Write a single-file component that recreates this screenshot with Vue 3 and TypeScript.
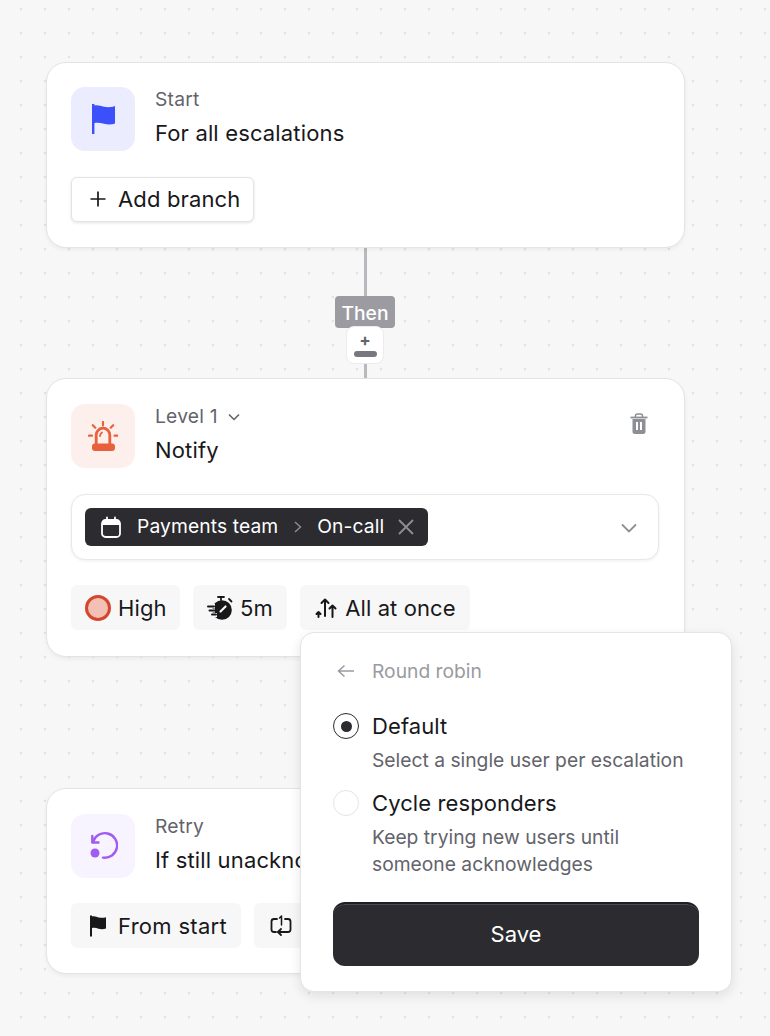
<script setup lang="ts">
const pills = ['From start'];
</script>

<template>
  <div class="page">
    <section class="card">
      <div class="head">
        <div class="tile tile-blue">
          <svg width="28" height="34" viewBox="0 0 28 34"><path d="M3 2h2.400v30H3z" fill="#3b4ffb"/><path d="M5 3.500c3.500-1 6.500.3 10 1.200 4 .9 8 .5 11-.7v17.400c-3 1.300-7 1.400-11 .4-3.500-1-6.800-1.300-10-.6z" fill="#3b4ffb"/></svg>
        </div>
        <div class="titles">
          <div class="label">Start</div>
          <div class="title">For all escalations</div>
        </div>
      </div>
      <button class="add">
        <svg width="20" height="20" viewBox="0 0 20 20"><path d="M10 2.500v15M2.500 10h15" stroke="#18181b" stroke-width="1.700" fill="none"/></svg>
        <span>Add branch</span>
      </button>
    </section>

    <div class="connector">
      <div class="line top"></div>
      <div class="then">Then</div>
      <div class="plus">
        <span class="plus-sign">+</span>
        <span class="plus-bar"></span>
      </div>
      <div class="line bottom"></div>
    </div>

    <section class="card level">
      <button class="trash" aria-label="Delete">
        <svg width="20" height="22" viewBox="0 0 20 22"><path d="M1.500 4.500h17" stroke="#8e8e95" stroke-width="1.800" fill="none"/><path d="M6.500 4V3a2 2 0 0 1 2-2h3a2 2 0 0 1 2 2v1" stroke="#8e8e95" stroke-width="1.500" fill="none"/><path fill-rule="evenodd" d="M3.500 6h13v12.500a2.500 2.500 0 0 1-2.500 2.500H6a2.500 2.500 0 0 1-2.500-2.500zM7 9v8h2V9zm4 0v8h2V9z" fill="#8e8e95"/></svg>
      </button>
      <div class="head">
        <div class="tile tile-red">
          <svg width="30" height="30" viewBox="0 0 30 30" fill="none" stroke="#e8603c">
            <path d="M15 1v3.500M4.800 4.200l2.500 2.500M25.200 4.200l-2.500 2.500M1 14.700h3M26.500 14.700h3" stroke-width="2.200" stroke-linecap="round"/>
            <path d="M8.200 23v-9a6.800 6.800 0 0 1 13.600 0v9" stroke-width="2.800"/>
            <path d="M12 15a4 4 0 0 1 2-3.500" stroke-width="1.800" stroke-linecap="round"/>
            <rect x="4" y="22.500" width="23" height="7.500" rx="3" fill="#e8603c" stroke="none"/>
          </svg>
        </div>
        <div class="titles">
          <div class="label">Level 1
            <svg class="mini" width="14" height="14" viewBox="0 0 14 14"><path d="M2 4.500l5 5 5-5" stroke="#5f5f68" stroke-width="1.500" fill="none"/></svg>
          </div>
          <div class="title">Notify</div>
        </div>
      </div>

      <div class="select">
        <div class="chip">
          <svg width="22" height="22" viewBox="0 0 22 22" fill="none"><rect x="2" y="4" width="18" height="17" rx="3.500" stroke="#fff" stroke-width="1.800"/><path d="M2 5.500a3 3 0 0 1 3-1.500h12a3 3 0 0 1 3 1.500V9H2z" fill="#fff"/><path d="M7 1.500v3M15 1.500v3" stroke="#fff" stroke-width="1.800" stroke-linecap="round"/></svg>
          <span class="chip-a">Payments team</span>
          <svg width="10" height="14" viewBox="0 0 10 14"><path d="M2 2l5.500 5L2 12" stroke="#8e8e95" stroke-width="1.400" fill="none"/></svg>
          <span class="chip-b">On-call</span>
          <svg width="18" height="18" viewBox="0 0 18 18"><path d="M2 2l14 14M16 2L2 16" stroke="#8e8e95" stroke-width="1.800" fill="none"/></svg>
        </div>
        <svg class="caret" width="16" height="10" viewBox="0 0 16 10"><path d="M1 1.500l7 7 7-7" stroke="#8e8e95" stroke-width="1.800" fill="none"/></svg>
      </div>

      <div class="pills">
        <div class="pill pill-high">
          <span class="sev"></span>
          High
        </div>
        <div class="pill">
          <svg width="26" height="26" viewBox="0 0 26 26" fill="none">
            <path d="M11 2h6M14 2v3M22 4l2.500 2.500" stroke="#18181b" stroke-width="1.800" stroke-linecap="round"/>
            <circle cx="15" cy="15" r="9.800" fill="#18181b"/>
            <path d="M0 11h8M1 15.500h7M3 20h7" stroke="#f7f7f7" stroke-width="4"/>
            <path d="M1 11.500h6M2.500 15.500h5M5 19.500h4" stroke="#18181b" stroke-width="2" stroke-linecap="round"/>
            <path d="M13.500 16.500l5-5" stroke="#f7f7f7" stroke-width="2.200" stroke-linecap="round"/>
          </svg>
          <span>5m</span>
        </div>
        <div class="pill">
          <svg width="24" height="24" viewBox="0 0 24 24" fill="none" stroke="#18181b" stroke-width="2" stroke-linecap="round" stroke-linejoin="round">
            <path d="M11 20V3.500M7.500 7L11 3.500 14.500 7"/>
            <path d="M18.500 21V9.500M15.500 12.500l3-3 3 3"/>
            <path d="M4.500 21v-5M2.500 18l2-2 2 2"/>
          </svg>
          All at once
        </div>
      </div>
    </section>

    <section class="card retry">
      <div class="head">
        <div class="tile tile-purple">
          <svg width="30" height="30" viewBox="0 0 30 30" fill="none">
            <path d="M5 11A12.300 12.300 0 1 1 15 26.600" stroke="#a05cf0" stroke-width="2.400" stroke-linecap="round"/>
            <path d="M4.300 5v6.500h6.200" stroke="#a05cf0" stroke-width="2.400" stroke-linecap="round" stroke-linejoin="round"/>
            <circle cx="7" cy="22" r="4.500" fill="#a05cf0"/>
          </svg>
        </div>
        <div class="titles">
          <div class="label">Retry</div>
          <div class="title">If still unacknowledged</div>
        </div>
      </div>
      <div class="pills">
        <div class="pill pill-wide" v-for="p in pills" :key="p">
          <svg width="26" height="26" viewBox="0 0 26 26"><path d="M5 2.500h2v21H5z" fill="#18181b"/><path d="M6.500 3.500c3-.9 5 .2 7.500 1 2.500.6 5 .4 7-.3v11.300c-2.500.9-5 .9-7.500.2-2.500-.8-4.500-1.200-7-.4z" fill="#18181b"/></svg>
          {{ p }}
        </div>
        <div class="pill">
          <svg width="26" height="26" viewBox="0 0 26 26" fill="none" stroke="#18181b" stroke-width="1.800" stroke-linecap="round" stroke-linejoin="round">
            <path d="M9 6H6a2.500 2.500 0 0 0-2.500 2.500v8A2.500 2.500 0 0 0 6 19h2"/>
            <path d="M17 6h3a2.500 2.500 0 0 1 2.500 2.500v8A2.500 2.500 0 0 1 20 19H10"/>
            <path d="M13 16l-3 3 3 3"/>
            <path d="M11.500 5l2-2v9" stroke-width="1.500"/>
          </svg>
          3 times
        </div>
      </div>
    </section>

    <aside class="popover">
      <div class="back">
        <svg width="20" height="14" viewBox="0 0 20 14"><path d="M18 7H2.500M8.500 1.500L2.500 7l6 5.500" stroke="#9a9aa1" stroke-width="1.500" fill="none"/></svg>
        <span>Round robin</span>
      </div>
      <div class="option first">
        <span class="radio on"><span class="dot"></span></span>
        <div class="opt-title">Default</div>
        <div class="opt-desc">Select a single user per escalation</div>
      </div>
      <div class="option second">
        <span class="radio"></span>
        <div class="opt-title">Cycle responders</div>
        <div class="opt-desc">Keep trying new users until<br>someone acknowledges</div>
      </div>
      <button class="save">Save</button>
    </aside>
  </div>
</template>

<style scoped>
.page {
  position: relative;
  box-sizing: border-box;
  width: 770px;
  height: 1036px;
  overflow: hidden;
  padding: 62px 85px 0 46px;
  background-color: #f7f7f7;
  background-image: radial-gradient(circle at 21px 9px, #e2e2e6 1.1px, transparent 1.6px);
  background-size: 24px 24px;
  font-family: Inter, "Liberation Sans", sans-serif;
  color: #18181b;
}
.card {
  position: relative;
  box-sizing: border-box;
  width: 639px;
  height: 186px;
  padding: 24px;
  background: #fff;
  border: 1px solid #e4e4e7;
  border-radius: 20px;
  box-shadow: 0 2px 4px rgba(24, 24, 27, 0.05);
}
.level { height: 279px; padding-top: 25px; }
.retry { margin-top: 131px; padding-top: 25px; }
.head { display: flex; gap: 20px; }
.tile {
  display: flex;
  align-items: center;
  justify-content: center;
  width: 64px;
  height: 64px;
  border-radius: 14px;
}
.tile-blue { background: #ebedfe; }
.tile-red { background: #fdf0ec; }
.tile-purple { background: #f8f4ff; }
.label {
  display: flex;
  align-items: center;
  gap: 9px;
  height: 24px;
  font-size: 19.250px;
  line-height: 24px;
  letter-spacing: 0.2px;
  color: #63636b;
}
.mini { margin-top: 2px; }
.title {
  margin-top: 8px;
  font-size: 22px;
  line-height: 28px;
  letter-spacing: 0.15px;
  white-space: nowrap;
}
.add {
  display: flex;
  align-items: center;
  gap: 10px;
  box-sizing: border-box;
  width: 183px;
  height: 45px;
  margin-top: 26px;
  padding: 0 0 2px 16px;
  background: #fff;
  border: 1px solid #e4e4e7;
  border-radius: 6px;
  box-shadow: 0 1px 3px rgba(24, 24, 27, 0.12);
  font: 400 22px Inter, sans-serif;
  letter-spacing: 0.15px;
  color: #18181b;
}
.connector {
  display: flex;
  flex-direction: column;
  align-items: center;
  width: 638px;
}
.line { width: 3px; margin-left: 1px; background: #b8b8bd; }
.line.top { height: 48px; }
.line.bottom { height: 14px; }
.then {
  box-sizing: border-box;
  width: 60px;
  height: 32px;
  border-radius: 4px;
  background: #9b9ba1;
  color: #fff;
  font-size: 19.250px;
  font-weight: 500;
  line-height: 34px;
  text-align: center;
}
.plus {
  display: flex;
  flex-direction: column;
  align-items: center;
  box-sizing: border-box;
  width: 38px;
  height: 38px;
  margin-top: -2px;
  background: #fff;
  border: 1px solid #ececee;
  border-radius: 8px;
}
.plus-sign {
  font-size: 17px;
  line-height: 18px;
  font-weight: 700;
  height: 20px;
  margin-top: 4px;
  color: #63636b;
}
.plus-bar {
  width: 23px;
  height: 6px;
  border-radius: 3px;
  background: #77777f;
}
.trash {
  position: absolute;
  top: 34px;
  right: 35px;
  padding: 0;
  border: 0;
  background: none;
  line-height: 0;
}
.select {
  display: flex;
  align-items: center;
  justify-content: space-between;
  box-sizing: border-box;
  width: 588px;
  height: 66px;
  margin-top: 26px;
  padding: 0 21px 0 13px;
  background: #fff;
  border: 1px solid #e8e8ea;
  border-radius: 14px;
  box-shadow: 0 1px 3px rgba(24, 24, 27, 0.07);
}
.caret { margin-top: 2px; }
.chip {
  display: flex;
  align-items: center;
  box-sizing: border-box;
  height: 38px;
  width: 343px;
  padding: 0 12px 0 15px;
  background: #2b2b30;
  border-radius: 6px;
  color: #fff;
  font-size: 19.250px;
  letter-spacing: 0.1px;
}
.chip-a { margin: 0 15px 2px 15px; }
.chip-b { margin: 0 13px 2px 14px; }
.pills {
  display: flex;
  gap: 13.400px;
  margin-top: 25px;
}
.pill {
  display: flex;
  align-items: center;
  gap: 7px;
  box-sizing: border-box;
  height: 45px;
  padding: 0 14px;
  background: #f7f7f7;
  border-radius: 6px;
  font-size: 22px;
  letter-spacing: 0.1px;
  white-space: nowrap;
}
.pill-high { padding-right: 13px; }
.pill-wide { letter-spacing: 0.3px; }
.sev {
  box-sizing: border-box;
  width: 26px;
  height: 26px;
  border-radius: 50%;
  border: 3px solid #d5462a;
  background: #f2c0b5;
}
.popover {
  position: absolute;
  left: 300px;
  top: 632px;
  box-sizing: border-box;
  width: 432px;
  height: 360px;
  padding: 0 32px;
  background: #fff;
  border: 1px solid #e4e4e7;
  border-radius: 14px;
  box-shadow: 0 4px 12px rgba(24, 24, 27, 0.1);
}
.back {
  display: flex;
  align-items: center;
  gap: 16px;
  height: 24px;
  margin-top: 26px;
  padding-left: 3px;
  font-size: 19.250px;
  color: #9a9aa1;
}
.option { position: relative; padding-left: 39px; }
.option.first { margin-top: 27px; }
.option.second { margin-top: 13px; }
.radio {
  position: absolute;
  left: 0;
  top: 3px;
  display: flex;
  align-items: center;
  justify-content: center;
  box-sizing: border-box;
  width: 26px;
  height: 26px;
  border: 1px solid #e4e4e7;
  border-radius: 50%;
}
.radio.on { border-color: #2b2b30; }
.dot { width: 11px; height: 11px; border-radius: 50%; background: #2b2b30; }
.opt-title { font-size: 22px; line-height: 32px; letter-spacing: 0.1px; white-space: nowrap; }
.opt-desc { margin-top: 5px; font-size: 19.250px; line-height: 27px; color: #63636b; white-space: nowrap; }
.save {
  display: block;
  box-sizing: border-box;
  width: 366px;
  height: 64px;
  margin-top: 24px;
  padding-bottom: 4px;
  background: #2b2b30;
  border: 0;
  border-top: 2px solid #1f1f23;
  border-radius: 12px;
  box-shadow: inset 0 1px 0 #4a4a50;
  color: #fff;
  font: 400 22px Inter, sans-serif;
}
</style>

<style>
html, body { margin: 0; background: #f7f7f7; }
</style>
